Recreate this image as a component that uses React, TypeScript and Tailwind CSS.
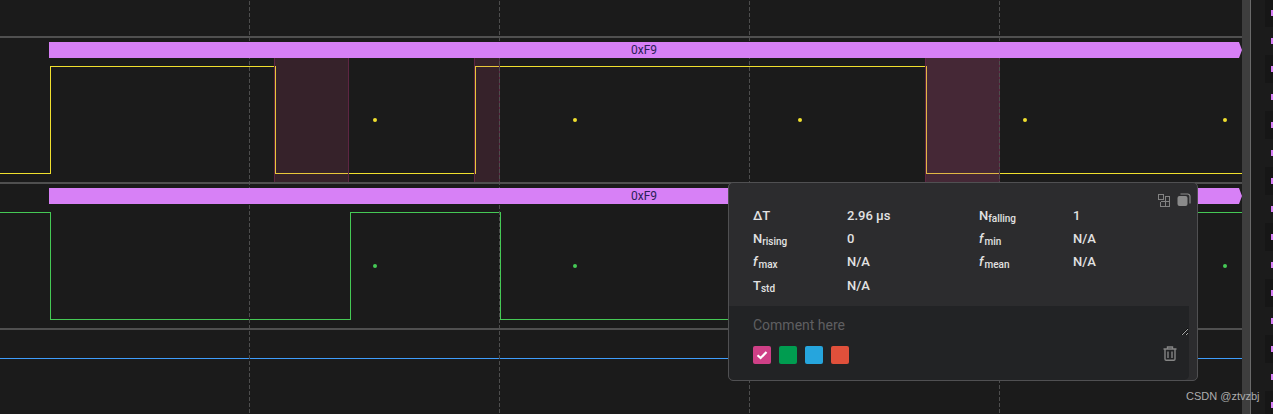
import React from "react";

const DASH_X = [249, 499, 749, 999];
const YELLOW_DOTS = [375, 575, 800, 1025, 1225];
const GREEN_DOTS = [375, 575, 800, 1025, 1225];
const STRIP = Array.from({ length: 16 }, (_, i) => i);

function Waves() {
  return (
    <svg className="absolute left-0 top-0" width="1242" height="414" viewBox="0 0 1242 414">
      <g fill="none" strokeWidth="1" shapeRendering="crispEdges">
        <path d="M0 173.5H50.5V66.5H275.5V173.5H475.5V66.5H926.5V173.5H1242" stroke="#f0e02e" />
        <path d="M0 212.5H50.5V319.5H350.5V212.5H500.5V319.5H735M1190 212.5H1242" stroke="#45c955" />
        <path d="M500 212V320" stroke="#45c955" />
        <path d="M0 358.5H1242" stroke="#3f9dfb" />
      </g>
      <g shapeRendering="crispEdges">
        <rect x="274" y="42" width="75" height="140" fill="rgb(200,77,127)" fillOpacity="0.16" />
        <rect x="474" y="42" width="26" height="140" fill="rgb(200,77,127)" fillOpacity="0.16" />
        <rect x="925" y="42" width="75" height="140" fill="rgb(184,77,130)" fillOpacity="0.27" />
        <path d="M274.5 42V182M348.5 42V182M474.5 42V182M499.5 42V182M925.5 42V182M999.5 42V182" stroke="#5e2542" fill="none" />
      </g>
      <g stroke="#4d4d4d" strokeWidth="1" strokeDasharray="4 2" shapeRendering="crispEdges">
        {DASH_X.map((x) => (
          <line key={x} x1={x + 0.5} y1="1" x2={x + 0.5} y2="414" />
        ))}
      </g>
      {YELLOW_DOTS.map((x) => (
        <circle key={x} cx={x} cy="120" r="2" fill="#f0e02e" />
      ))}
      {GREEN_DOTS.map((x) => (
        <circle key={x} cx={x} cy="266" r="2" fill="#45c955" />
      ))}
    </svg>
  );
}

function Lane({ label }: { label?: string }) {
  return (
    <div className="h-[146px] border-t-2 border-[#505050] pt-1">
      {label && (
        <div className="ml-[49px] flex h-4 items-center justify-center bg-[#d780f6] pr-[3px] text-[12px] text-[#2a2058] [clip-path:polygon(0_0,1190px_0,100%_50%,1190px_100%,0_100%)]">
          {label}
        </div>
      )}
    </div>
  );
}

function Label({ name, sub, italic }: { name: string; sub: string; italic?: boolean }) {
  return (
    <div>
      {italic ? <i className="pr-px">{name}</i> : name}
      <span className="relative top-[2px] text-[10px]">{sub}</span>
    </div>
  );
}

function Popup() {
  return (
    <div className="absolute left-[728px] top-[182px] flex h-[199px] w-[470px] flex-col overflow-hidden rounded-[5px] border border-[#505052] bg-[#2c2c2e]">
      <div className="absolute right-[6px] top-[10px] flex gap-[6px]">
        <svg width="14" height="14" viewBox="0 0 14 14" fill="none" stroke="#828282" strokeWidth="1" shapeRendering="crispEdges">
          <rect x="1.5" y="1.5" width="5" height="5" />
          <path d="M7.5 3.5H12.5V13.5H3.5V8.5M8.5 3.5V13.5M3.5 8.5H12.5" />
        </svg>
        <svg width="14" height="14" viewBox="0 0 14 14">
          <rect x="0.5" y="3" width="10" height="10" rx="2" fill="#8a8a8a" />
          <path d="M3.5 1H10.5A2.5 2.5 0 0 1 13 3.5V10.5" fill="none" stroke="#8a8a8a" strokeWidth="1.2" />
        </svg>
      </div>
      <div className="grid h-[123px] grid-cols-[94px_132px_94px_1fr] grid-rows-[23px_23px_24px_23px] items-center pl-6 pt-[21px] text-[13px] font-medium text-[#e2e2e2]">
        <div>ΔT</div>
        <div>2.96 µs</div>
        <Label name="N" sub="falling" />
        <div>1</div>
        <Label name="N" sub="rising" />
        <div>0</div>
        <Label name="f" sub="min" italic />
        <div>N/A</div>
        <Label name="f" sub="max" italic />
        <div>N/A</div>
        <Label name="f" sub="mean" italic />
        <div>N/A</div>
        <Label name="T" sub="std" />
        <div>N/A</div>
      </div>
      <div className="flex w-[460px] flex-1 flex-col rounded-b-[5px] bg-[#222325]">
        <textarea
          placeholder="Comment here"
          className="h-[30px] w-full resize-y bg-transparent pl-6 pt-[10px] text-[14px] leading-[18px] text-[#e2e2e2] outline-none placeholder:text-[#5f5f61]"
        />
        <div className="mt-[10px] flex items-start justify-between pl-6 pr-3">
          <div className="flex gap-2">
            <div className="flex h-[18px] w-[18px] items-center justify-center rounded-[2px] bg-[#cf4087]">
              <svg width="12" height="12" viewBox="0 0 12 12" fill="none">
                <path d="M1.5 6.2L4.6 9L10.5 3" stroke="#ffffff" strokeWidth="2.2" />
              </svg>
            </div>
            <div className="h-[18px] w-[18px] rounded-[2px] bg-[#009c50]" />
            <div className="h-[18px] w-[18px] rounded-[2px] bg-[#26a5dd]" />
            <div className="h-[18px] w-[18px] rounded-[2px] bg-[#e0503b]" />
          </div>
          <svg width="14" height="15" viewBox="0 0 14 15" fill="none" stroke="#858585" strokeWidth="1.4">
            <path d="M0.5 3H13.5M4.5 3V1H9.5V3M2 3V13C2 13.8 2.5 14.3 3.2 14.3H10.8C11.5 14.3 12 13.8 12 13V3M5 5.5V12M9 5.5V12" />
          </svg>
        </div>
      </div>
    </div>
  );
}

export default function App() {
  return (
    <div className="relative flex h-[414px] w-[1273px] overflow-hidden bg-[#1b1b1b] font-['Roboto',sans-serif]">
      <div className="relative w-[1242px] shrink-0">
        <Waves />
        <div className="relative pt-9">
          <Lane label="0xF9" />
          <Lane label="0xF9" />
          <Lane />
        </div>
      </div>
      <div className="w-2 shrink-0 bg-[#3e3e3e]" />
      <div className="w-px shrink-0 bg-[#6a6a6a]" />
      <div className="flex-1 overflow-hidden pl-[14px]">
        <div className="-mt-px">
          {STRIP.map((i) => (
            <div
              key={i}
              className={
                i % 2 === 0
                  ? "flex h-7 items-center justify-end bg-[#161616]"
                  : "flex h-7 items-center justify-end"
              }
            >
              <div className="h-[6px] w-[2px] bg-[#d780f6]" />
            </div>
          ))}
        </div>
      </div>
      <Popup />
      <div className="absolute left-[1186px] top-[390px] text-[11px] leading-[13px] text-[#adadad] font-['Liberation_Sans',sans-serif]">
        CSDN @ztvzbj
      </div>
    </div>
  );
}
